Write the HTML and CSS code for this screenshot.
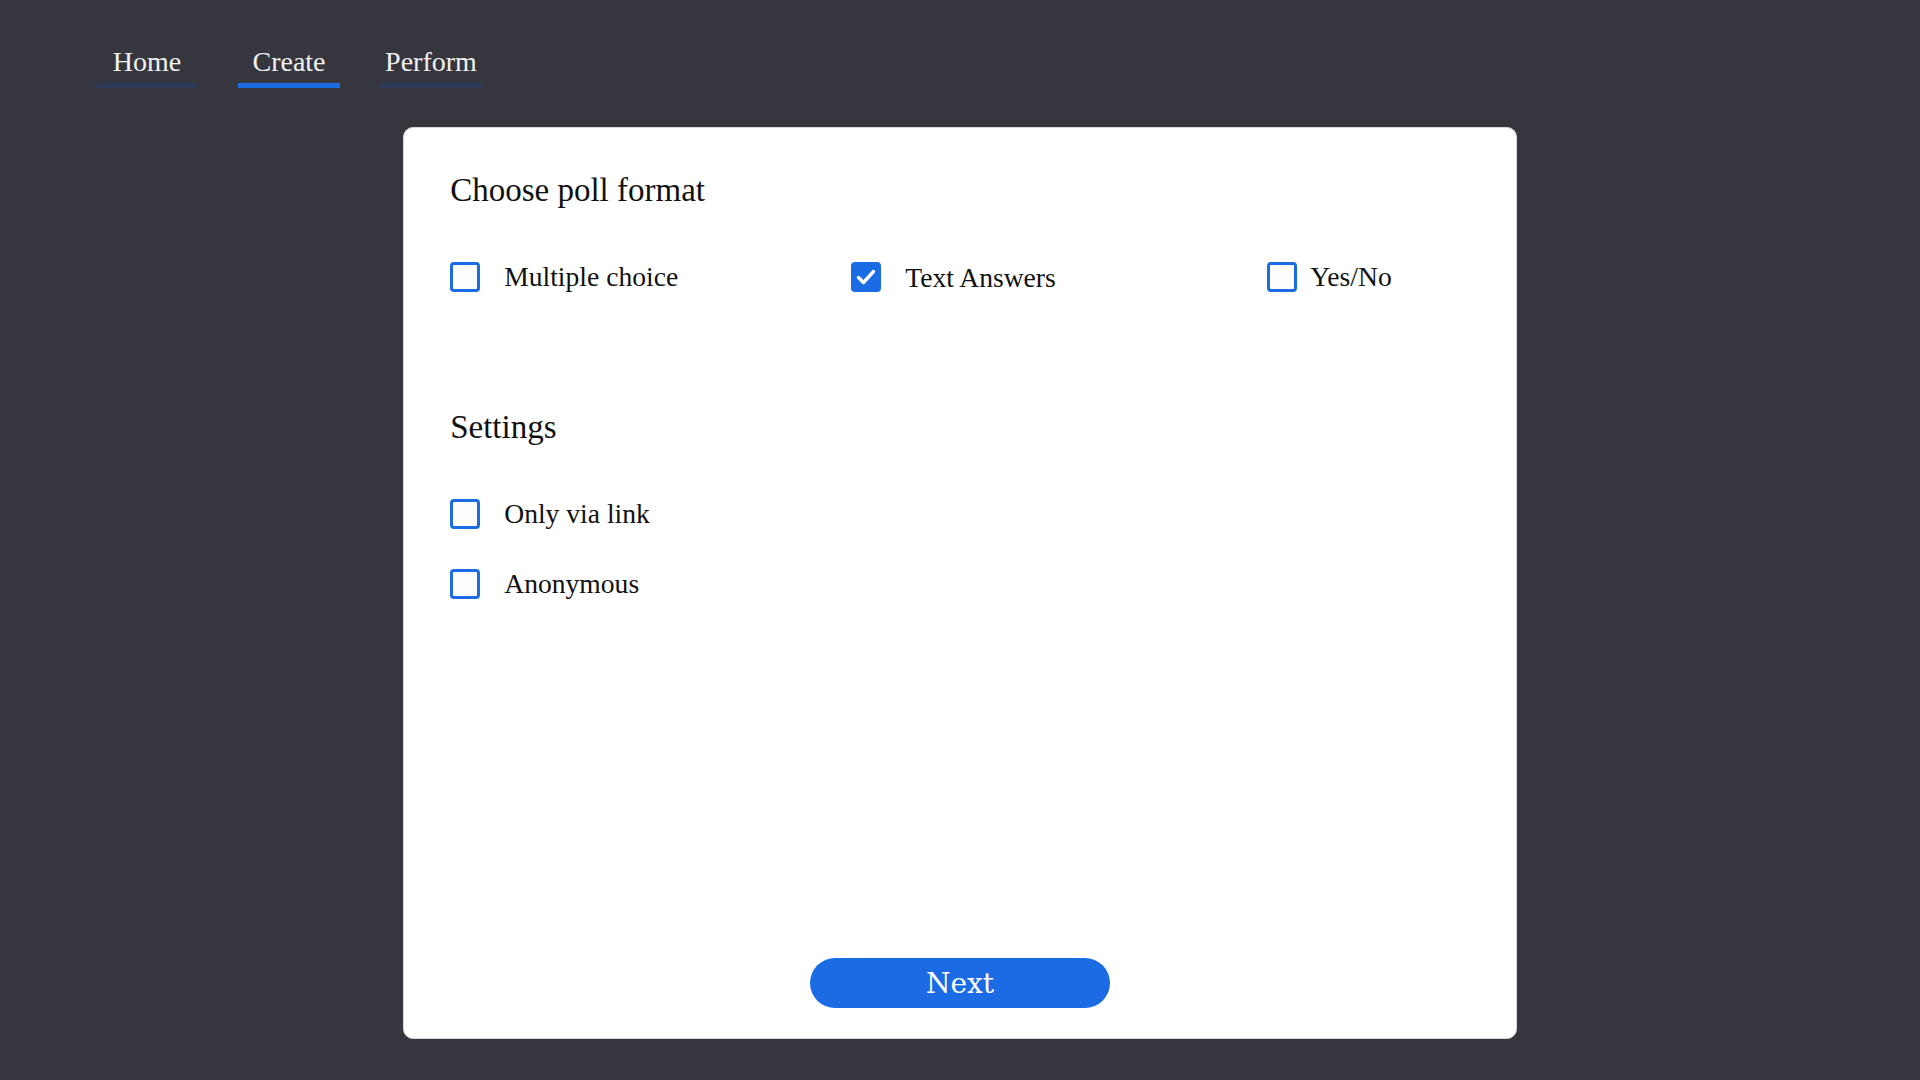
FILE: index.html
```html
<!DOCTYPE html>
<html lang="en">
<head>
<meta charset="utf-8">
<title>Create poll</title>
<link rel="stylesheet" href="styles.css">
</head>
<body>
<nav class="nav">
  <a class="tab">Home</a>
  <a class="tab tab-active">Create</a>
  <a class="tab">Perform</a>
</nav>
<main class="card">
  <h2 class="heading">Choose poll format</h2>
  <div class="formats">
    <label class="option">
      <span class="box"></span>
      <span class="label">Multiple choice</span>
    </label>
    <label class="option">
      <span class="box box-checked">
        <svg viewBox="0 0 30 30" width="30" height="30"><path d="M7.5 15.5 L12.5 20.5 L22.5 9.5" fill="none" stroke="#fff" stroke-width="3.4" stroke-linecap="round" stroke-linejoin="round"/></svg>
      </span>
      <span class="label label-low">Text Answers</span>
    </label>
    <label class="option option-tight">
      <span class="box"></span>
      <span class="label">Yes/No</span>
    </label>
  </div>
  <h2 class="heading heading-settings">Settings</h2>
  <div class="settings">
    <label class="option">
      <span class="box"></span>
      <span class="label">Only via link</span>
    </label>
    <label class="option">
      <span class="box"></span>
      <span class="label">Anonymous</span>
    </label>
  </div>
  <div class="actions">
    <button class="next">Next</button>
  </div>
</main>
</body>
</html>
```
FILE: styles.css
```css
html, body {
  margin: 0;
  padding: 0;
}
body {
  background: #36363f;
  font-family: "Liberation Serif", "Times New Roman", serif;
  height: 1080px;
  overflow: hidden;
}
.nav {
  display: flex;
  gap: 40px;
  padding: 46px 0 0 96px;
}
.tab {
  width: 102px;
  text-align: center;
  color: #f2f2f2;
  font-size: 28px;
  line-height: 32px;
  padding-bottom: 5px;
  border-bottom: 5px solid #2c3957;
  cursor: pointer;
}
.tab-active {
  border-bottom-color: #1b6be4;
}
.card {
  box-sizing: border-box;
  width: 58%;
  height: 912px;
  margin: 39px auto 0;
  background: #fff;
  border: 1px solid #d6d6da;
  border-radius: 10px;
  padding: 43px 46px 30px;
  display: flex;
  flex-direction: column;
}
.heading {
  margin: 0;
  font-weight: normal;
  font-size: 33px;
  line-height: 38px;
  color: #111;
}
.formats {
  display: grid;
  grid-template-columns: 401px 416px auto;
  margin-top: 53px;
}
.option {
  display: flex;
  align-items: center;
  gap: 24px;
  height: 30px;
}
.option-tight {
  gap: 13px;
}
.box {
  box-sizing: border-box;
  width: 30px;
  height: 30px;
  flex: none;
  border: 3px solid #1b6be4;
  border-radius: 4px;
  background: #fff;
}
.box-checked {
  background: #1b6be4;
  border: none;
}
.box-checked svg {
  display: block;
}
.label {
  font-size: 27.6px;
  line-height: 30px;
  color: #111;
}
.label-low {
  position: relative;
  top: 1px;
}
.heading-settings {
  margin-top: 116px;
}
.settings {
  display: flex;
  flex-direction: column;
  gap: 40px;
  margin-top: 53px;
}
.actions {
  margin-top: auto;
  display: flex;
  justify-content: center;
}
.next {
  box-sizing: border-box;
  width: 300px;
  height: 50px;
  border: none;
  border-radius: 25px;
  background: #1b6be4;
  color: #fff;
  font-family: "DejaVu Serif", serif;
  font-size: 28px;
  line-height: 48px;
  padding: 2px 0 0;
  cursor: pointer;
}
```
